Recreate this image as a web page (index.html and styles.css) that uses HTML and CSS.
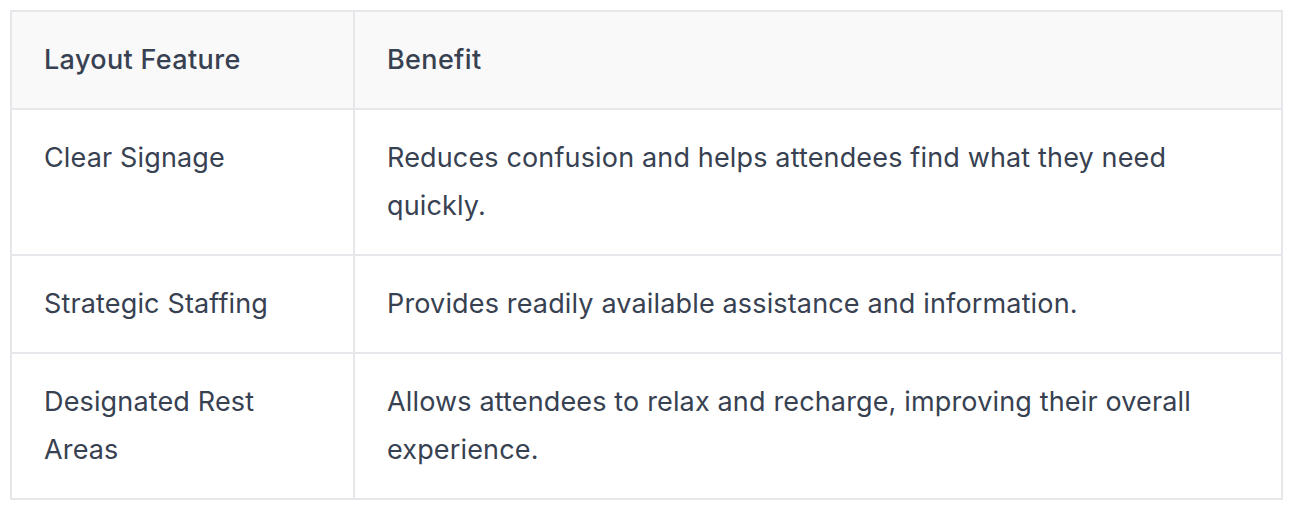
FILE: index.html
```html
<!DOCTYPE html>
<html>
<head>
<meta charset="utf-8">
<link rel="stylesheet" href="styles.css">
</head>
<body>
<div class="wrap">
<table class="features">
  <thead>
    <tr><th class="col-feature">Layout Feature</th><th>Benefit</th></tr>
  </thead>
  <tbody>
    <tr><td>Clear Signage</td><td>Reduces confusion and helps attendees find what they need quickly.</td></tr>
    <tr><td>Strategic Staffing</td><td>Provides readily available assistance and information.</td></tr>
    <tr><td>Designated Rest Areas</td><td>Allows attendees to relax and recharge, improving their overall experience.</td></tr>
  </tbody>
</table>
</div>
</body>
</html>
```
FILE: styles.css
```css
html, body { margin: 0; padding: 0; background: #ffffff; }
.wrap { padding: 10px 11px 10px 10px; }
.features {
  width: 100%;
  border-collapse: collapse;
  font-family: Inter, "Noto Sans", sans-serif;
  font-size: 27px;
  line-height: 48px;
  letter-spacing: 0.15px;
  color: #374151;
  border: 2px solid #e5e7eb;
}
.features th, .features td {
  border: 2px solid #e5e7eb;
  padding: 24px 32px;
  text-align: left;
  vertical-align: top;
  font-weight: 400;
}
.features th { background: #f9f9f9; font-weight: 500; letter-spacing: 0.35px; }
.col-feature { width: 277px; }
```
